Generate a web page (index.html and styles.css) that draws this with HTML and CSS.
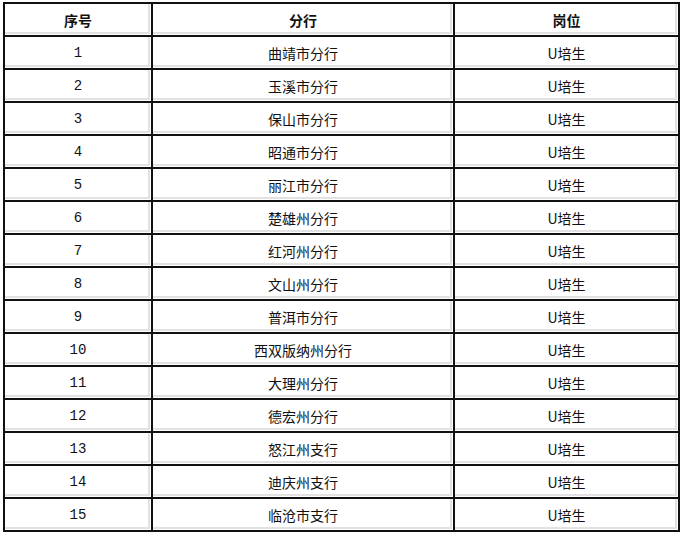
FILE: index.html
```html
<!DOCTYPE html>
<html lang="zh">
<head>
<meta charset="utf-8">
<link rel="stylesheet" href="styles.css">
</head>
<body>
<table class="grid">
  <colgroup>
    <col class="c1"><col class="c2"><col class="c3">
  </colgroup>
  <thead>
    <tr><th>序号</th><th>分行</th><th>岗位</th></tr>
  </thead>
  <tbody>
    <tr><td class="num">1</td><td>曲靖市分行</td><td>U培生</td></tr>
    <tr><td class="num">2</td><td>玉溪市分行</td><td>U培生</td></tr>
    <tr><td class="num">3</td><td>保山市分行</td><td>U培生</td></tr>
    <tr><td class="num">4</td><td>昭通市分行</td><td>U培生</td></tr>
    <tr><td class="num">5</td><td>丽江市分行</td><td>U培生</td></tr>
    <tr><td class="num">6</td><td>楚雄州分行</td><td>U培生</td></tr>
    <tr><td class="num">7</td><td>红河州分行</td><td>U培生</td></tr>
    <tr><td class="num">8</td><td>文山州分行</td><td>U培生</td></tr>
    <tr><td class="num">9</td><td>普洱市分行</td><td>U培生</td></tr>
    <tr><td class="num">10</td><td>西双版纳州分行</td><td>U培生</td></tr>
    <tr><td class="num">11</td><td>大理州分行</td><td>U培生</td></tr>
    <tr><td class="num">12</td><td>德宏州分行</td><td>U培生</td></tr>
    <tr><td class="num">13</td><td>怒江州支行</td><td>U培生</td></tr>
    <tr><td class="num">14</td><td>迪庆州支行</td><td>U培生</td></tr>
    <tr><td class="num">15</td><td>临沧市支行</td><td>U培生</td></tr>
  </tbody>
</table>
</body>
</html>
```
FILE: styles.css
```css
html, body {
  margin: 0;
  padding: 0;
  background: #fff;
}
body {
  padding: 2px 0 0 3px;
  font-family: "Noto Sans CJK SC", "Noto Sans", sans-serif;
  font-size: 14px;
  color: #111;
}
.grid {
  border-collapse: collapse;
  table-layout: fixed;
  width: 675px;
  border: 2px solid #111;
}
.c1 { width: 148px; }
.c2 { width: 302px; }
.c3 { width: 225px; }
.grid tr {
  height: 33px;
}
.grid th,
.grid td {
  border: 1px solid #111;
  border-width: 2px 2px 1px 1px;
  padding: 0;
  text-align: center;
  vertical-align: middle;
  line-height: 16px;
  box-shadow: inset -1px -1px 0 #fff, inset -3px -3px 0 #e2e2e2;
}
.grid th {
  font-weight: bold;
  font-size: 14px;
}
.grid td.num {
  font-family: "Liberation Mono", "DejaVu Sans Mono", monospace;
  font-size: 14px;
}
```
